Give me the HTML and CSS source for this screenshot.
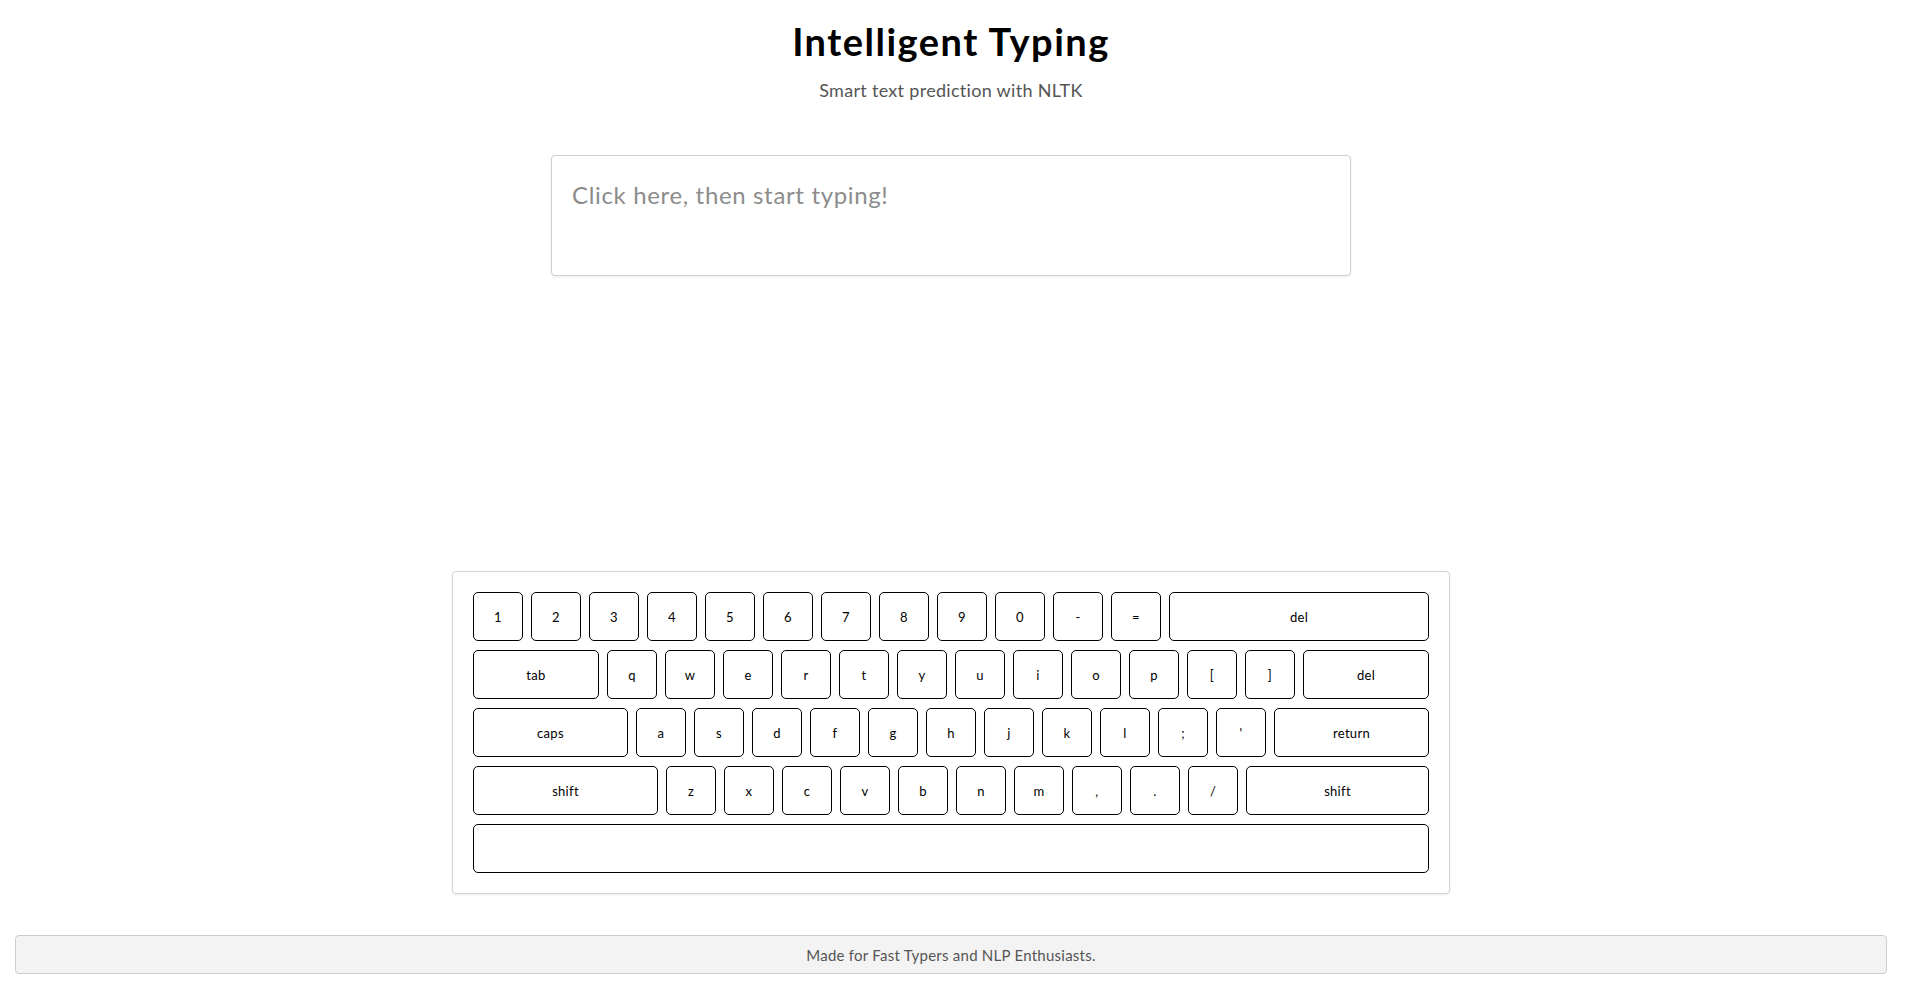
FILE: index.html
```html
<!DOCTYPE html>
<html lang="en">
<head>
<meta charset="utf-8">
<title>Intelligent Typing</title>
<link rel="stylesheet" href="styles.css">
</head>
<body>
<div class="page">
  <header class="header">
    <h1 class="title">Intelligent Typing</h1>
    <p class="subtitle">Smart text prediction with NLTK</p>
  </header>

  <textarea class="input" placeholder="Click here, then start typing!"></textarea>

  <div class="suggestions"></div>

  <div class="keyboard">
    <div class="row">
      <div class="key">1</div><div class="key">2</div><div class="key">3</div><div class="key">4</div><div class="key">5</div><div class="key">6</div><div class="key">7</div><div class="key">8</div><div class="key">9</div><div class="key">0</div><div class="key">-</div><div class="key">=</div>
      <div class="key wide">del</div>
    </div>
    <div class="row">
      <div class="key tab">tab</div>
      <div class="key">q</div><div class="key">w</div><div class="key">e</div><div class="key">r</div><div class="key">t</div><div class="key">y</div><div class="key">u</div><div class="key">i</div><div class="key">o</div><div class="key">p</div><div class="key">[</div><div class="key">]</div>
      <div class="key wide">del</div>
    </div>
    <div class="row">
      <div class="key caps">caps</div>
      <div class="key">a</div><div class="key">s</div><div class="key">d</div><div class="key">f</div><div class="key">g</div><div class="key">h</div><div class="key">j</div><div class="key">k</div><div class="key">l</div><div class="key">;</div><div class="key">'</div>
      <div class="key wide">return</div>
    </div>
    <div class="row">
      <div class="key shift">shift</div>
      <div class="key">z</div><div class="key">x</div><div class="key">c</div><div class="key">v</div><div class="key">b</div><div class="key">n</div><div class="key">m</div><div class="key">,</div><div class="key">.</div><div class="key">/</div>
      <div class="key wide">shift</div>
    </div>
    <div class="row">
      <div class="key wide space"></div>
    </div>
  </div>

  <footer class="footer">Made for Fast Typers and NLP Enthusiasts.</footer>
</div>
</body>
</html>
```

FILE: styles.css
```css
* { box-sizing: border-box; }

html, body {
  margin: 0;
  padding: 0;
  background: #ffffff;
}

body {
  font-family: "Lato", "Noto Sans", "Liberation Sans", sans-serif;
  color: #000;
}

.page {
  display: flex;
  flex-direction: column;
  align-items: center;
  padding: 0 18px 0 15px;
}

.header {
  display: flex;
  flex-direction: column;
  align-items: center;
}

.title {
  margin: 18px 0 0;
  font-size: 38px;
  line-height: 46px;
  font-weight: 700;
  color: #000;
  letter-spacing: 1.5px;
}

.subtitle {
  margin: 15px 0 0;
  font-size: 18px;
  line-height: 22px;
  color: #555;
  letter-spacing: 0.3px;
}

.input {
  display: block;
  margin-top: 54px;
  width: 800px;
  height: 121px;
  padding: 24px 20px;
  border: 1px solid #cfcfcf;
  border-radius: 4px;
  box-shadow: 0 1px 3px rgba(0, 0, 0, 0.08);
  font-family: inherit;
  font-size: 24px;
  line-height: 29px;
  letter-spacing: 0.65px;
  color: #333;
  resize: none;
  outline: none;
}

.input::placeholder {
  color: #8c8c8c;
}

.suggestions {
  height: 295px;
}

.keyboard {
  width: 998px;
  padding: 20px;
  border: 1px solid #d4d4d4;
  border-radius: 4px;
  box-shadow: 0 1px 3px rgba(0, 0, 0, 0.08);
  display: flex;
  flex-direction: column;
  gap: 9px;
  background: #fff;
}

.row {
  display: flex;
  gap: 8px;
}

.key {
  width: 50px;
  height: 49px;
  flex: none;
  border: 1px solid #000;
  border-radius: 5px;
  display: flex;
  align-items: center;
  justify-content: center;
  font-size: 13px;
  letter-spacing: 0.3px;
  color: #000;
}

.key.tab { width: 126px; }
.key.caps { width: 155px; }
.key.shift { width: 185px; }
.key.wide { flex: 1; width: auto; }

.footer {
  margin: 41px 0 16px;
  align-self: stretch;
  height: 39px;
  border: 1px solid #cccccc;
  border-radius: 4px;
  background: #f3f3f3;
  display: flex;
  align-items: center;
  justify-content: center;
  font-size: 15px;
  letter-spacing: 0.25px;
  color: #555;
}
```
